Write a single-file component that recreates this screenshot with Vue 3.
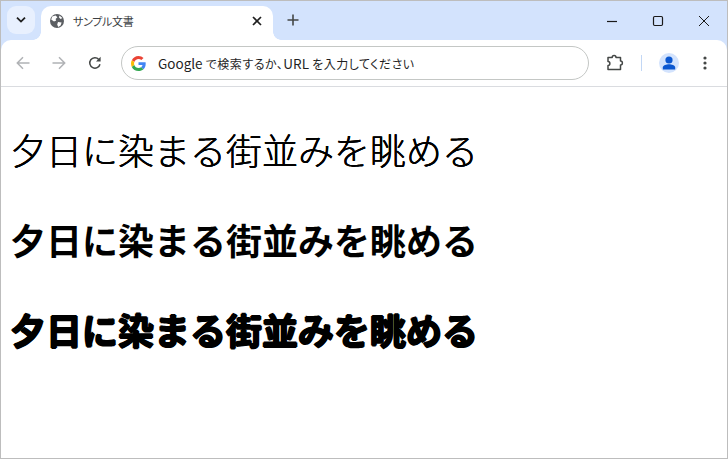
<script setup>
const lines = [
  { text: '夕日に染まる街並みを眺める', cls: 'light' },
  { text: '夕日に染まる街並みを眺める', cls: 'bold' },
  { text: '夕日に染まる街並みを眺める', cls: 'black' },
]
</script>

<template>
  <div class="window">
    <div class="strip">
      <button class="tabsearch" aria-label="タブを検索">
        <svg width="12" height="8" viewBox="0 0 12 8"><path d="M2 1.600 6 5.600 10 1.600" fill="none" stroke="#1f1f1f" stroke-width="1.800"/></svg>
      </button>
      <div class="tab">
        <span class="flare flare-l"></span>
        <svg class="globe" width="16" height="16" viewBox="0 0 16 16">
          <circle cx="8" cy="8" r="7" fill="#5b5e62"/>
          <path d="M3.200 3.600 6.600 2.600 8.400 4.200 6.600 6 7.200 7.600 5 8.600 2.200 6.600ZM9 9 12.600 9.600 11.600 12.600 9.200 14 8.200 11.400ZM10.400 2.600 13.400 5 11.600 6 10 4.400Z" fill="#fff"/>
        </svg>
        <span class="tabtitle">サンプル文書</span>
        <svg class="close" width="10" height="10" viewBox="0 0 10 10"><path d="M1 1 9 9M9 1 1 9" stroke="#1f1f1f" stroke-width="1.700" fill="none"/></svg>
        <span class="flare flare-r"></span>
      </div>
      <svg class="plus" width="12" height="12" viewBox="0 0 12 12"><path d="M6 .5V11.500M.5 6H11.500" stroke="#444746" stroke-width="1.600" fill="none"/></svg>
      <div class="controls">
        <svg width="12" height="12" viewBox="0 0 12 12"><path d="M1 6.500H11" stroke="#1a1a1a" stroke-width="1.200" fill="none"/></svg>
        <svg width="12" height="12" viewBox="0 0 12 12"><rect x="1.500" y="1.500" width="9" height="9" rx="1.200" stroke="#1a1a1a" stroke-width="1.200" fill="none"/></svg>
        <svg width="12" height="12" viewBox="0 0 12 12"><path d="M1 1 11 11M11 1 1 11" stroke="#1a1a1a" fill="none"/></svg>
      </div>
    </div>

    <div class="toolbar">
      <svg class="nav" width="16" height="16" viewBox="0 0 16 16"><path d="M14.500 8H2.500M8 2.300 2.300 8 8 13.700" stroke="#b0b2b5" stroke-width="1.500" fill="none"/></svg>
      <svg class="nav fwd" width="16" height="16" viewBox="0 0 16 16"><path d="M1.500 8H13.500M8 2.300 13.700 8 8 13.700" stroke="#b0b2b5" stroke-width="1.500" fill="none"/></svg>
      <svg class="nav reload" width="16" height="16" viewBox="0 0 16 16"><path d="M13 9.200A5.200 5.200 0 1 1 11.800 4.400" stroke="#444746" stroke-width="1.500" fill="none"/><path d="M13.600 1.800V6.400H9Z" fill="#444746"/></svg>
      <div class="omnibox">
        <svg width="15" height="15" viewBox="0 0 48 48">
          <path fill="#EA4335" d="M24 9.500c3.500 0 6.700 1.200 9.200 3.600l6.900-6.900C35.900 2.400 30.500 0 24 0 14.600 0 6.500 5.400 2.600 13.200l8 6.200C12.500 13.700 17.800 9.500 24 9.500z"/>
          <path fill="#4285F4" d="M47 24.500c0-1.600-.1-3.100-.4-4.500H24v9h12.900c-.6 3-2.200 5.500-4.800 7.200l7.700 6c4.500-4.200 7.200-10.300 7.200-17.700z"/>
          <path fill="#FBBC05" d="M10.600 28.600c-.5-1.400-.8-3-.8-4.600s.3-3.200.8-4.600l-8-6.200C.9 16.500 0 20.100 0 24s.9 7.500 2.600 10.800l8-6.200z"/>
          <path fill="#34A853" d="M24 48c6.500 0 11.900-2.100 15.900-5.800l-7.700-6c-2.200 1.400-4.900 2.300-8.200 2.300-6.200 0-11.500-4.200-13.400-9.900l-8 6.200C6.500 42.600 14.600 48 24 48z"/>
        </svg>
        <span class="omnitext"><span class="latin">Google</span> で検索するか、<span class="latin">URL</span> を入力してください</span>
      </div>
      <svg class="ext" width="18" height="18" viewBox="0 0 18 18"><path d="M2 3.500H6.200C6.200 .8 10 .8 10 3.500H14.500V7C17 7 17 11 14.500 11V15.500H2V11.500C4.500 11.500 4.500 7.500 2 7.500Z" fill="none" stroke="#444746" stroke-width="1.500" stroke-linejoin="round"/></svg>
      <span class="sep"></span>
      <span class="avatar">
        <svg width="20" height="20" viewBox="0 0 20 20"><circle cx="10" cy="7" r="3.600" fill="#0b57d0"/><path d="M3.800 16.400V14.600C3.800 12.300 7.500 11.300 10 11.300S16.200 12.300 16.200 14.600V16.400Z" fill="#0b57d0"/></svg>
      </span>
      <svg class="menu" width="4" height="14" viewBox="0 0 4 14"><circle cx="2" cy="2" r="1.600" fill="#444746"/><circle cx="2" cy="7" r="1.600" fill="#444746"/><circle cx="2" cy="12" r="1.600" fill="#444746"/></svg>
    </div>

    <main class="page">
      <p v-for="l in lines" :key="l.cls" :class="l.cls">{{ l.text }}</p>
    </main>
  </div>
</template>

<style>
html, body { margin: 0; padding: 0; background: #fff; overflow: hidden; }
</style>

<style scoped>
.window {
  box-sizing: border-box;
  width: 728px;
  height: 459px;
  border: 1px solid #bdbdbd;
  background: #d3e3fd;
  display: flex;
  flex-direction: column;
  font-family: "Noto Sans CJK JP", "Noto Sans", sans-serif;
  overflow: hidden;
}
.strip {
  height: 39px;
  flex: none;
  display: flex;
  align-items: flex-end;
}
.tabsearch {
  width: 28px;
  height: 28px;
  margin: 0 6px 6px 6px;
  padding: 0;
  border: 0;
  border-radius: 9px;
  background: #e8f0fe;
  display: flex;
  align-items: center;
  justify-content: center;
}
.tab {
  position: relative;
  width: 232px;
  height: 34px;
  box-sizing: border-box;
  background: #fff;
  border-radius: 10px 10px 0 0;
  display: flex;
  align-items: center;
  padding: 0 11px 5px 8px;
}
.flare {
  position: absolute;
  bottom: 0;
  width: 8px;
  height: 8px;
  background: radial-gradient(circle at var(--c) 0, #d3e3fd 7.5px, #fff 8px);
}
.flare-l { left: -8px; --c: 0; }
.flare-r { right: -8px; --c: 100%; }
.globe { flex: none; }
.tabtitle {
  margin-left: 8px;
  flex: 1;
  font-size: 11px;
  letter-spacing: -.3px;
  font-feature-settings: "palt";
  color: #3c4043;
}
.close { flex: none; }
.plus { margin: 0 0 14px 14px; flex: none; }
.controls {
  margin-left: auto;
  margin-bottom: 13px;
  display: flex;
  gap: 34px;
  padding-right: 17px;
}
.toolbar {
  height: 47px;
  flex: none;
  box-sizing: border-box;
  background: #fff;
  border-bottom: 1px solid #dadce0;
  border-radius: 10px 10px 0 0;
  display: flex;
  align-items: center;
  padding-left: 14px;
}
.nav { flex: none; }
.fwd { margin-left: 20px; }
.reload { margin-left: 20px; }
.omnibox {
  box-sizing: border-box;
  width: 468px;
  height: 34px;
  margin-left: 18px;
  border: 1px solid #c4c7c5;
  border-radius: 17px;
  display: flex;
  align-items: center;
  padding-left: 9px;
  flex: none;
}
.omnitext {
  margin-left: 12px;
  font-size: 12px;
  letter-spacing: .5px;
  font-feature-settings: "palt";
  color: #1f1f1f;
  white-space: nowrap;
}
.latin { font-size: 13.5px; letter-spacing: 0; }
.ext { margin-left: 17px; flex: none; }
.sep { width: 1px; height: 16px; background: #c2d7f5; margin-left: 17px; flex: none; }
.avatar {
  margin-left: 17px;
  width: 20px;
  height: 20px;
  border-radius: 50%;
  background: #d3e3fd;
  display: flex;
  flex: none;
}
.menu { margin-left: 24px; flex: none; }
.page {
  flex: 1;
  background: #fff;
  padding: 35px 9px 0;
  display: flex;
  flex-direction: column;
  gap: 36px;
}
.page p {
  margin: 0;
  font-size: 36px;
  line-height: 54px;
  color: #000;
  white-space: nowrap;
}
.light {
  font-weight: 300;
  text-shadow: .3px 0 0 #000, -.3px 0 0 #000;
}
.bold {
  font-weight: 700;
}
.black {
  font-weight: 700;
  text-shadow: 1px 0 0 #000, -1px 0 0 #000, 0 1px 0 #000, 0 -1px 0 #000;
}
</style>
